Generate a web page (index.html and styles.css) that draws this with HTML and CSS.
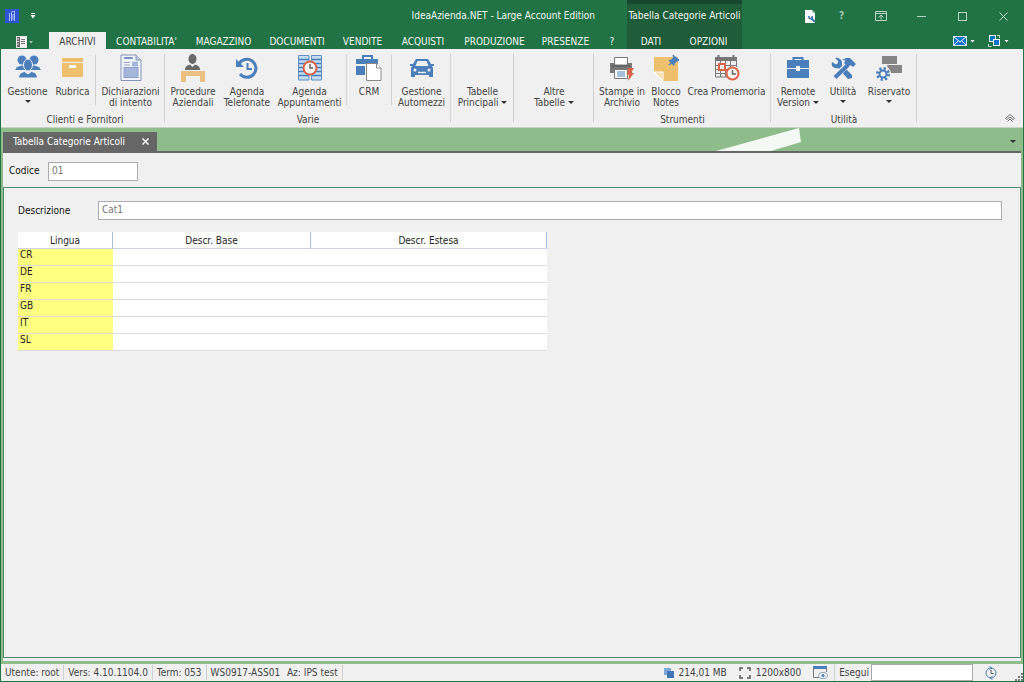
FILE: index.html
```html
<!DOCTYPE html>
<html lang="it">
<head>
<meta charset="utf-8"/>
<title>IdeaAzienda.NET - Large Account Edition</title>
<link rel="stylesheet" href="styles.css">
</head>
<body>
<div class="window">

  <header class="titlebar">
    <div class="title-left">
      <div class="title-row">
        <svg class="app-logo" width="14" height="14" viewBox="0 0 14 14">
          <rect width="14" height="14" fill="#2f55d4"/>
          <path d="M4.500 12V4M6.500 12V3L9.500 2V12M8 5V11" stroke="#a9c0f5" fill="none"/>
        </svg>
        <button class="quick" title="Personalizza">
          <svg width="6" height="6" viewBox="0 0 6 6"><path d="M1 0.5H5" stroke="#fff"/><path d="M0.5 2H5.5L3 5.5Z" fill="#fff"/></svg>
        </button>
        <h1>IdeaAzienda.NET - Large Account Edition</h1>
      </div>
      <nav class="tabs main-tabs">
        <button class="file" title="File">
          <svg width="18" height="12" viewBox="0 0 18 12">
            <rect x="0.5" y="0.5" width="10" height="11" fill="#666" stroke="#e8e8e8"/>
            <rect x="4" y="1" width="6" height="10" fill="#f4f4f4"/>
            <path d="M1 3H3M1 5.5H3M1 8H3" stroke="#ddd"/>
            <path d="M5 3.5H9M5 5.5H9M5 7.5H9" stroke="#777"/>
            <path d="M13 5H17L15 7.5Z" fill="#a5c8b2"/>
          </svg>
        </button>
        <a href="#" class="active">ARCHIVI</a>
        <a href="#">CONTABILITA'</a>
        <a href="#">MAGAZZINO</a>
        <a href="#">DOCUMENTI</a>
        <a href="#">VENDITE</a>
        <a href="#">ACQUISTI</a>
        <a href="#">PRODUZIONE</a>
        <a href="#">PRESENZE</a>
        <a href="#">?</a>
      </nav>
    </div>

    <div class="context">
      <div class="context-title">Tabella Categorie Articoli</div>
      <nav class="tabs context-tabs">
        <a href="#">DATI</a>
        <a href="#">OPZIONI</a>
      </nav>
    </div>

    <div class="title-right">
      <div class="window-buttons">
        <button class="settings" title="Impostazioni">
          <svg width="11" height="13" viewBox="0 0 11 13">
            <path d="M0 0H7L10 3V13H0Z" fill="#fff"/><path d="M7 0V3H10" fill="#b7c6c0"/>
            <path d="M6 8L10 12" stroke="#3a6ea8" stroke-width="2"/>
            <path d="M4 6Q3.500 8.500 5.500 8.800Q8 8.500 7 6" fill="none" stroke="#3a6ea8" stroke-width="1.6"/>
          </svg>
        </button>
        <button class="help" title="Aiuto">?</button>
        <button title="Opzioni barra multifunzione">
          <svg width="12" height="10" viewBox="0 0 12 10" fill="none" stroke="#b9d3c4"><path d="M0.5 0.5H11.5V9.5H0.5ZM0.5 2.5H11.5M6 8.5V4.5M3.5 6.5L6 4L8.5 6.5"/></svg>
        </button>
        <button title="Riduci">
          <svg width="9" height="9" viewBox="0 0 9 9"><path d="M0 4.5H9" stroke="#b9d3c4"/></svg>
        </button>
        <button title="Ingrandisci">
          <svg width="9" height="9" viewBox="0 0 9 9"><rect x="0.5" y="0.5" width="8" height="8" fill="none" stroke="#b9d3c4"/></svg>
        </button>
        <button title="Chiudi">
          <svg width="9" height="9" viewBox="0 0 9 9"><path d="M0.5 0.5L8.5 8.5M8.5 0.5L0.5 8.5" stroke="#c6dccf"/></svg>
        </button>
      </div>
      <div class="tools">
        <button title="Messaggi">
          <svg width="22" height="12" viewBox="0 0 22 12">
            <rect x="0.5" y="1.5" width="13" height="9" fill="#0b72cc" stroke="#d5e8f5"/>
            <path d="M1 2L7 7L13 2M1 10L5 6M13 10L9 6" stroke="#fff" fill="none"/>
            <path d="M17.500 5H21.500L19.500 7.500Z" fill="#fff"/>
          </svg>
        </button>
        <button title="Finestre">
          <svg width="21" height="12" viewBox="0 0 21 12">
            <rect x="1.500" y="0.500" width="6" height="6" fill="#0b72cc" stroke="#fff"/>
            <rect x="5.500" y="4.500" width="6" height="6" fill="#0b72cc" stroke="#fff"/>
            <path d="M9 0.500H11.500V3M0.500 9V11.500H3.500" fill="none" stroke="#cfe0d6"/>
            <path d="M16.500 5H20.500L18.500 7.500Z" fill="#fff"/>
          </svg>
        </button>
      </div>
    </div>
  </header>

  <section class="ribbon">
    <div class="group">
      <div class="items clienti">
        <button>
          <svg width="28" height="26" viewBox="0 0 28 26" fill="#4a7fbb">
            <circle cx="8" cy="5" r="4.500"/><circle cx="20" cy="5" r="4.500"/>
            <path d="M1 15L3 12L8 10.500H20L25 12L27 15Z"/>
            <ellipse cx="14" cy="10" rx="4.500" ry="6" stroke="#f0f0f0" stroke-width="1"/>
            <path d="M4.500 23C5 18.500 7 17.500 10.500 16.500L14 19L17.500 16.500C21 17.500 23 18.500 23.500 23Z" stroke="#f0f0f0" stroke-width="1"/>
          </svg>
          <span>Gestione</span><i class="arrow"></i>
        </button>
        <button>
          <svg width="22" height="26" viewBox="0 0 22 26">
            <path d="M0 3H21V7H0ZM0 8H21V22H0Z" fill="#eebf6d"/>
            <rect x="7" y="10" width="7" height="3" fill="#fff"/>
          </svg>
          <span>Rubrica</span>
        </button>
        <hr>
        <button>
          <svg width="22" height="27" viewBox="0 0 22 27">
            <path d="M1 0.500H16L21 5.500V26H1Z" fill="#f2f5fb" stroke="#8494b8"/>
            <path d="M16 0.500V5.500H21" fill="#c5d0e8" stroke="#8494b8"/>
            <path d="M4 3.500H13" stroke="#7e93c4" stroke-width="2"/>
            <path d="M4 8H10M4 10.500H10" stroke="#8f9fc8"/>
            <rect x="12" y="7" width="6" height="5" fill="#a6b6da"/>
            <rect x="4" y="13" width="14" height="10" fill="#a6b6da" stroke="#8f9fc8"/>
          </svg>
          <span>Dichiarazioni<br>di intento</span>
        </button>
      </div>
      <h2>Clienti e Fornitori</h2>
    </div>

    <div class="group">
      <div class="items varie">
        <button>
          <svg width="26" height="28" viewBox="0 0 26 28">
            <ellipse cx="12.500" cy="5" rx="4" ry="5" fill="#6a6a6a"/>
            <path d="M5 16C5 12.500 7 11.500 10 10.500L12.500 13L15 10.500C18 11.500 20 12.500 20 16Z" fill="#6a6a6a"/>
            <path d="M1 17H25V28H20V22H6V28H1Z" fill="#ecc083"/>
          </svg>
          <span>Procedure<br>Aziendali</span>
        </button>
        <button>
          <svg width="24" height="26" viewBox="0 0 24 26" fill="none" stroke="#4a7fbb">
            <path d="M4 9A9 9 0 1 1 5 19" stroke-width="3"/>
            <path d="M12.500 8V14H17" stroke-width="2"/>
            <path d="M1 4V12H9Z" fill="#4a7fbb" stroke="none"/>
          </svg>
          <span>Agenda<br>Telefonate</span>
        </button>
        <button>
          <svg width="24" height="26" viewBox="0 0 24 26">
            <path d="M0.500 0.500H11V25H0.500ZM13.500 0.500H23.500V25H13.500Z" fill="#c6dcef" stroke="#5f8fc4"/>
            <path d="M1 4.500H11M1 8.500H11M1 12.500H11M1 16.500H11M1 20.500H11M14 4.500H23M14 8.500H23M14 12.500H23M14 16.500H23M14 20.500H23" stroke="#4a7fbb" stroke-width="1.500"/>
            <circle cx="12" cy="13" r="6.500" fill="#f4f4f4" stroke="#dc6248" stroke-width="2"/>
            <path d="M12 9V13H15" stroke="#666" stroke-width="1.500" fill="none"/>
          </svg>
          <span>Agenda<br>Appuntamenti</span>
        </button>
        <hr>
        <button>
          <svg width="26" height="28" viewBox="0 0 26 28">
            <path d="M7 5V2H16V5" stroke="#4a7fbb" stroke-width="2" fill="none"/>
            <path d="M0 5H22V10H0ZM0 12H9V21H0Z" fill="#4a7fbb"/>
            <path d="M10.500 9.500H20.500L25 14V26.500H10.500Z" fill="#fff" stroke="#8a8a8a"/>
            <path d="M20.500 9.500V14H25" fill="#fff" stroke="#8a8a8a"/>
          </svg>
          <span>CRM</span>
        </button>
        <hr>
        <button>
          <svg width="24" height="26" viewBox="0 0 24 26">
            <path d="M0 9H3L6 4H18L21 9H24V11H22L23 13V22H19V20H5V22H1V13L2 11H0Z" fill="#4a7fbb"/>
            <path d="M7.500 6H16.500L18.500 11H5.500Z" fill="#f0f0f0"/>
            <circle cx="5" cy="15" r="1.500" fill="#f0f0f0"/><circle cx="19" cy="15" r="1.500" fill="#f0f0f0"/>
            <path d="M8 17.500H16" stroke="#f0f0f0" stroke-width="1.500"/>
          </svg>
          <span>Gestione<br>Automezzi</span>
        </button>
      </div>
      <h2>Varie</h2>
    </div>

    <div class="group">
      <div class="items tabelle">
        <button><span>Tabelle<br>Principali <i class="arrow inline"></i></span></button>
      </div>
    </div>

    <div class="group">
      <div class="items altre">
        <button><span>Altre<br>Tabelle <i class="arrow inline"></i></span></button>
      </div>
    </div>

    <div class="group">
      <div class="items strumenti">
        <button>
          <svg width="26" height="26" viewBox="0 0 26 26">
            <path d="M1 8H23V18H1Z" fill="#777"/>
            <path d="M5.500 2.500H18.500V10H5.500Z" fill="#fff" stroke="#777"/>
            <path d="M3 11H21" stroke="#555"/>
            <path d="M5.500 14.500H18.500V23.500H5.500Z" fill="#fff" stroke="#777"/>
            <path d="M8 17H16M8 19H16M8 21H16" stroke="#4a7fbb"/>
            <path d="M19 13H25L22 18H25L19 26L20 20H18Z" fill="#dc6248"/>
          </svg>
          <span>Stampe in<br>Archivio</span>
        </button>
        <button>
          <svg width="28" height="28" viewBox="0 0 28 28">
            <path d="M2 3H26V27H11L2 18Z" fill="#eebf6d"/>
            <path d="M2 18H11V27Z" fill="#f7e3b4" stroke="#fff"/>
            <path d="M21 1L27 6L25 7L22 9.500V11.500L17 6.500L19.500 6L21.500 3.500Z" fill="#4a7fbb" stroke="#4a7fbb"/>
            <path d="M20 8.500L17 11" stroke="#4a7fbb" stroke-width="1.500"/>
          </svg>
          <span>Blocco<br>Notes</span>
        </button>
        <button>
          <svg width="26" height="28" viewBox="0 0 26 28">
            <path d="M1 3H23V7H1Z" fill="#777"/>
            <path d="M4.500 1V5M19.500 1V5" stroke="#777" stroke-width="2"/>
            <path d="M1.500 6V23H14M6.500 6V23M11.500 6V23M16.500 6V14M22.500 6V13M1 11.500H23M1 15.500H14M1 19.500H12" stroke="#777" fill="none"/>
            <rect x="5" y="10" width="6" height="6" fill="#f0f0f0" stroke="#dc6248" stroke-width="2"/>
            <circle cx="18.500" cy="19.500" r="6" fill="#f4f4f4" stroke="#dc6248" stroke-width="2"/>
            <path d="M18.500 16V20H22" stroke="#666" stroke-width="1.500" fill="none"/>
          </svg>
          <span>Crea Promemoria</span>
        </button>
      </div>
      <h2>Strumenti</h2>
    </div>

    <div class="group">
      <div class="items utilita">
        <button>
          <svg width="24" height="26" viewBox="0 0 24 26">
            <path d="M7.500 6V3H16.500V6" stroke="#4a7fbb" stroke-width="2" fill="none"/>
            <path d="M1 5H23V13H14V11H10V13H1ZM1 14H10V16H14V14H23V23H1Z" fill="#4a7fbb"/>
          </svg>
          <span>Remote<br>Version <i class="arrow inline"></i></span>
        </button>
        <button>
          <svg width="26" height="26" viewBox="0 0 26 26">
            <path d="M5 3L8 6V8L6 9.500L2 7C0.500 11 4 14 8 13L18 24L22 23V20L12 10C13 5 9 2 5 3Z" fill="#4a7fbb"/>
            <path d="M17 10L4 23" stroke="#f0f0f0" stroke-width="6"/>
            <path d="M18 10L5 22.500" stroke="#4a7fbb" stroke-width="4"/>
            <path d="M12 5L16 3H20L26 9L23 12L20.500 10L18 12L14 8L15.500 5.500Z" fill="#4a7fbb"/>
          </svg>
          <span>Utilità</span><i class="arrow"></i>
        </button>
        <button>
          <svg width="28" height="26" viewBox="0 0 28 26">
            <rect x="7" y="1" width="15" height="8" fill="#858585"/>
            <path d="M12 10H27V18H14Z" fill="#858585"/>
            <circle cx="8" cy="19" r="5.500" fill="none" stroke="#f0f0f0" stroke-width="5"/>
            <circle cx="8" cy="19" r="5.500" fill="none" stroke="#4a7fbb" stroke-width="3" stroke-dasharray="2.160"/>
            <circle cx="8" cy="19" r="3.500" fill="#f0f0f0" stroke="#4a7fbb" stroke-width="2"/>
          </svg>
          <span>Riservato</span><i class="arrow"></i>
        </button>
      </div>
      <h2>Utilità</h2>
    </div>

    <button class="collapse" title="Comprimi">
      <svg width="10" height="8" viewBox="0 0 10 8" fill="none" stroke="#777"><path d="M0.500 4.500L5 0.500L9.500 4.500L8 5.500L5 3L2 5.500ZM2.500 7.500L5 5L7.500 7.500"/></svg>
    </button>
  </section>

  <main class="workspace">
    <div class="doc-tabs">
      <div class="doc-tab">
        <span>Tabella Categorie Articoli</span>
        <button title="Chiudi scheda">
          <svg width="7" height="7" viewBox="0 0 7 7"><path d="M0.500 0.500L6.500 6.500M6.500 0.500L0.500 6.500" stroke="#fff" stroke-width="1.500"/></svg>
        </button>
      </div>
      <svg class="swoosh" width="86" height="23" viewBox="0 0 86 23">
        <path d="M0 23L83 0L85 14L55 23Z" fill="#f5f9f5"/>
      </svg>
      <button class="doc-list" title="Schede aperte"><i class="arrow"></i></button>
    </div>

    <form class="document">
      <div class="key-row">
        <label for="codice">Codice</label>
        <input id="codice" type="text" value="01">
      </div>
      <div class="details">
        <div class="field">
          <label for="descrizione">Descrizione</label>
          <input id="descrizione" type="text" value="Cat1">
        </div>
        <table>
          <thead>
            <tr><th class="lang">Lingua</th><th class="base">Descr. Base</th><th class="ext">Descr. Estesa</th></tr>
          </thead>
          <tbody>
            <tr><td>CR</td><td></td><td></td></tr>
            <tr><td>DE</td><td></td><td></td></tr>
            <tr><td>FR</td><td></td><td></td></tr>
            <tr><td>GB</td><td></td><td></td></tr>
            <tr><td>IT</td><td></td><td></td></tr>
            <tr><td>SL</td><td></td><td></td></tr>
          </tbody>
        </table>
      </div>
    </form>
  </main>

  <footer class="status">
    <span class="cell">Utente: root</span>
    <span class="cell">Vers: 4.10.1104.0</span>
    <span class="cell">Term: 053</span>
    <span class="cell">WS0917-ASS01 <span class="company">Az: IPS test</span></span>
    <div class="status-right">
      <span class="info">
        <svg width="10" height="10" viewBox="0 0 10 10"><rect width="7" height="7" fill="#7fa9d6"/><rect x="3" y="3" width="7" height="7" fill="#3f78b8"/></svg>
        214,01 MB
      </span>
      <span class="info">
        <svg width="12" height="12" viewBox="0 0 12 12" fill="none" stroke="#555" stroke-width="1.500"><path d="M1 4V1H4M8 1H11V4M11 8V11H8M4 11H1V8"/></svg>
        1200x800
      </span>
      <svg width="15" height="13" viewBox="0 0 15 13">
        <path d="M0.500 2V11.500H6M13.500 2V6" fill="none" stroke="#777"/><rect width="14" height="3" fill="#4a7fbb"/>
        <ellipse cx="10" cy="9.500" rx="4.500" ry="3" fill="#f0f0f0" stroke="#8aa6c0"/><circle cx="10" cy="9.500" r="1.500" fill="#4a7fbb"/>
      </svg>
      <div class="run">
        <label for="esegui">Esegui</label>
        <input id="esegui" type="text">
      </div>
      <svg class="clock" width="12" height="14" viewBox="0 0 12 14" fill="none" stroke="#4a7fbb">
        <circle cx="6" cy="7" r="5"/><path d="M6 4V7.500H8.500" stroke="#555"/><path d="M4.500 0.500L7 2L4.500 3.500M7.500 10.500L5 12L7.500 13.500"/>
      </svg>
      <svg class="grip" width="8" height="8" viewBox="0 0 8 8" fill="#777"><path d="M6 0H8V2H6ZM3 3H5V5H3ZM6 3H8V5H6ZM0 6H2V8H0ZM3 6H5V8H3ZM6 6H8V8H6Z"/></svg>
    </div>
  </footer>

</div>
</body>
</html>
```
FILE: styles.css
```css
* {
  box-sizing: border-box;
}

body {
  margin: 0;
  font-family: "DejaVu Sans Condensed", "DejaVu Sans", sans-serif;
  font-size: 10px;
  line-height: 12px;
  color: #444;
}

button {
  padding: 0;
  border: none;
  background: none;
  font: inherit;
  color: inherit;
  cursor: pointer;
}

a {
  color: inherit;
  text-decoration: none;
}

h1, h2 {
  margin: 0;
  font-size: 10px;
  font-weight: normal;
}

svg {
  display: block;
  flex: none;
}

.window {
  display: flex;
  flex-direction: column;
  min-height: 100vh;
  background: #f0f0f0;
  border: 1px solid #217346;
  border-top: none;
}

/* title bar */
.titlebar {
  display: flex;
  height: 49px;
  margin: 0 -1px;
  background: #217346;
  color: #f0f7f2;
}

.title-left,
.context,
.title-right {
  display: flex;
  flex-direction: column;
}

.title-row {
  display: flex;
  align-items: center;
  height: 32px;
  padding: 0 32px 0 5px;
}

.title-row h1 {
  margin-left: auto;
}

.quick {
  margin-left: 11px;
}

.tabs {
  display: grid;
  height: 17px;
}

.main-tabs {
  grid-template-columns: 49px 57px 81px 73px 74px 57px 64px 79px 63px 30px;
}

.context-tabs {
  grid-template-columns: 48px 67px;
}

.tabs a,
.file {
  display: flex;
  align-items: center;
  justify-content: center;
  padding-top: 2px;
}

.tabs .active {
  background: #f0f0f0;
  color: #444;
}

.context {
  background: #1e5c3a;
  border-top: 4px solid #17472c;
}

.context-title {
  height: 28px;
  line-height: 24px;
  text-align: center;
}

.title-right {
  flex: 1;
}

.window-buttons,
.tools {
  display: flex;
  justify-content: flex-end;
  align-items: center;
}

.window-buttons {
  height: 32px;
}

.window-buttons button {
  display: flex;
  justify-content: center;
  width: 41px;
}

.window-buttons .settings {
  width: 26px;
}

.window-buttons .help {
  width: 37px;
  font-weight: bold;
  color: #a9cbb8;
}

.tools {
  gap: 13px;
  height: 17px;
  padding-right: 15px;
}

/* ribbon */
.ribbon {
  display: flex;
  position: relative;
  height: 79px;
  padding-left: 4px;
  border-bottom: 1px solid #c8d3c8;
}

.group {
  display: flex;
  flex-direction: column;
  position: relative;
}

.group::after {
  content: "";
  position: absolute;
  top: 5px;
  bottom: 5px;
  right: 0;
  border-right: 1px solid #d0d0d0;
}

.group h2 {
  margin-top: 2px;
  text-align: center;
}

.items {
  display: grid;
  height: 63px;
}

.clienti { grid-template-columns: 45px 45px 1px 69px; }
.varie { grid-template-columns: 56px 52px 73px 1px 44px 1px 59px; }
.tabelle { grid-template-columns: 63px; }
.altre { grid-template-columns: 80px; }
.strumenti { grid-template-columns: 56px 32px 89px; }
.utilita { grid-template-columns: 54px 36px 56px; }

.items button {
  display: flex;
  flex-direction: column;
  align-items: center;
  justify-content: flex-start;
  padding-top: 5px;
  line-height: 11px;
  white-space: nowrap;
}

.items button span {
  margin-top: 32px;
}

.items button svg + span {
  margin-top: 4px;
}

.items button svg {
  height: 28px;
}

.items hr {
  width: 1px;
  height: 50px;
  margin: 6px 0 0;
  border: none;
  background: #d0d0d0;
}

.arrow {
  border: 3px solid transparent;
  border-top-color: #333;
  border-bottom: none;
}

.items span + .arrow {
  margin-top: 3px;
}

.arrow.inline {
  display: inline-block;
  margin-bottom: 2px;
}

.collapse {
  position: absolute;
  right: 8px;
  bottom: 5px;
}

/* workspace */
.workspace {
  display: flex;
  flex-direction: column;
  flex: 1;
  padding: 4px 2px 3px;
  background: #8fbc8b;
}

.doc-tabs {
  display: flex;
  align-items: flex-end;
  height: 21px;
  border-bottom: 2px solid #666;
}

.doc-tab {
  display: flex;
  align-items: center;
  justify-content: space-between;
  width: 154px;
  height: 19px;
  padding: 0 8px 0 10px;
  background: #666;
  color: #fff;
}

.swoosh {
  margin-left: auto;
}

.doc-list {
  display: flex;
  margin: 0 5px 8px 208px;
}

.document {
  display: flex;
  flex-direction: column;
  flex: 1;
  padding-bottom: 3px;
  background: #f0f0f0;
}

.key-row,
.field {
  display: flex;
  align-items: center;
  color: #111;
}

.key-row {
  height: 34px;
  padding: 2px 0 0 6px;
}

.key-row label {
  width: 39px;
}

input {
  height: 19px;
  padding: 0 4px 2px 3px;
  border: 1px solid #ababab;
  background: #fff;
  font: inherit;
  color: #777;
}

.key-row input {
  width: 90px;
}

.details {
  flex: 1;
  padding: 13px 18px 13px 14px;
  border: 1px solid #4f8f6c;
}

.field label {
  width: 80px;
}

.field input {
  flex: 1;
}

table {
  width: 529px;
  margin-top: 12px;
  border-collapse: separate;
  border-spacing: 0;
  table-layout: fixed;
  background: #fff;
  color: #222;
}

.lang { width: 95px; }
.base { width: 198px; }

th {
  height: 17px;
  padding: 1px 0 0;
  border-right: 1px solid #a9bfdc;
  border-bottom: 1px solid #c9d5e6;
  font-weight: normal;
}

td {
  height: 17px;
  padding: 0 2px;
  border-bottom: 1px solid #dcdcdc;
  vertical-align: top;
}

td:first-child {
  background: #ffff80;
}

/* status bar */
.status {
  display: flex;
  align-items: center;
  height: 17px;
}

.cell {
  padding: 0 4px;
  line-height: 15px;
  border-right: 1px solid #d0d0d0;
}

.company {
  margin-left: 4px;
}

.status-right,
.info,
.run {
  display: flex;
  align-items: center;
}

.status-right {
  gap: 12px;
  margin-left: auto;
}

.info {
  gap: 5px;
}

.run {
  gap: 2px;
  margin-left: -6px;
  padding-left: 4px;
  border-left: 1px solid #d0d0d0;
}

.run input {
  width: 102px;
  height: 17px;
}

.grip {
  align-self: flex-end;
  margin-left: 6px;
}
```
